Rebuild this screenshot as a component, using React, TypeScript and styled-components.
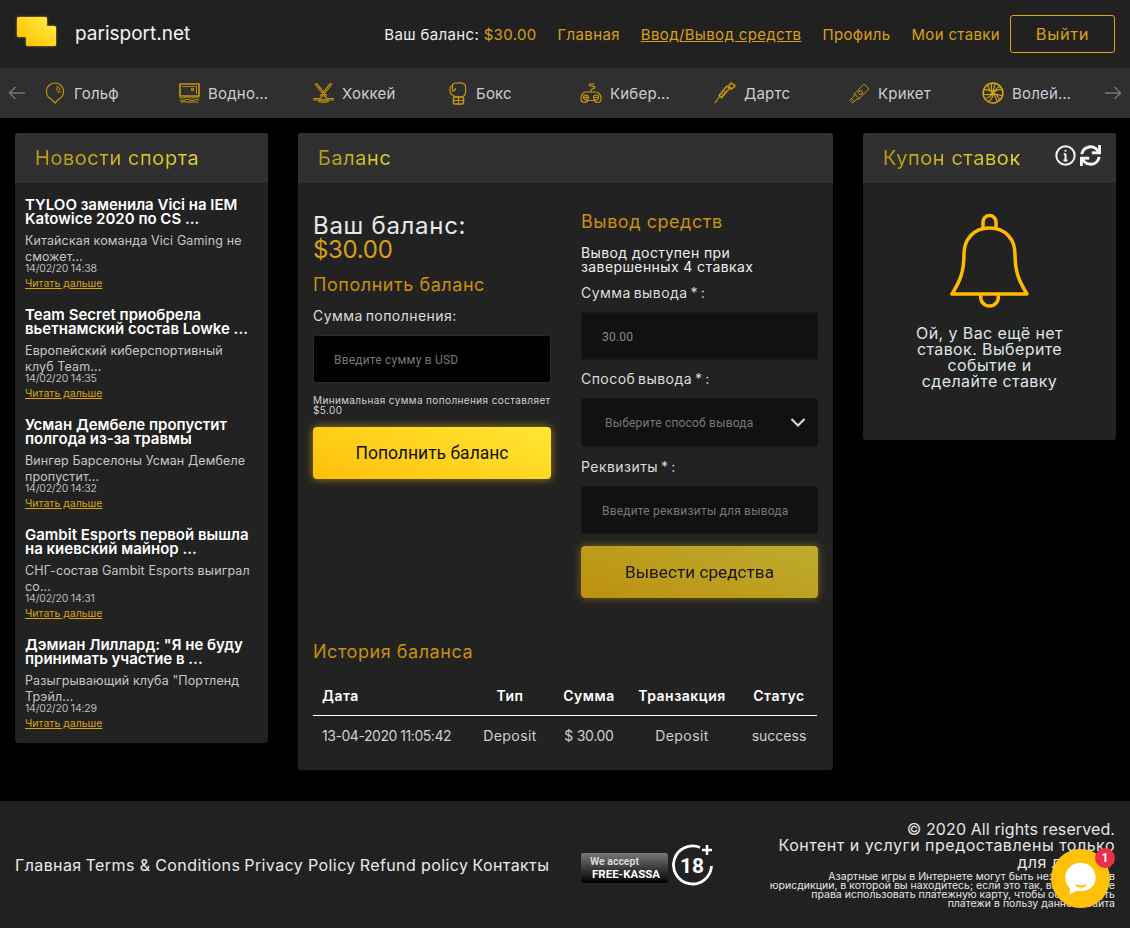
import React from "react";
import styled, { createGlobalStyle } from "styled-components";
import { FaSync } from "react-icons/fa";

const Global = createGlobalStyle`
  html, body { margin: 0; padding: 0; background: #000; }
  body { font-family: "Inter", "Noto Sans", sans-serif; color: #fff; }
  * { box-sizing: border-box; }
  a { color: inherit; text-decoration: none; }
`;

const Page = styled.div`
  width: 1130px; height: 928px; position: relative; overflow: hidden; background: #000;
`;
const Header = styled.header`
  height: 68px; background: #212121; display: flex; align-items: center; justify-content: space-between; padding: 0 15px 0 17px;
`;
const Brand = styled.a`
  display: flex; align-items: center; gap: 17px; font-size: 19px; color: #f2f2f2; letter-spacing: 0; padding-bottom: 2px;
`;
const Nav = styled.nav`
  display: flex; align-items: center; font-size: 15px; gap: 21px; letter-spacing: 0.35px; white-space: nowrap;
`;
const Balance = styled.span` color: #eee; `;
const Gold = styled.span` color: #d9a015; `;
const NavLink = styled.a<{ $active?: boolean }>`
  color: #d9a015; ${(p) => (p.$active ? "text-decoration: underline;" : "")}
`;
const Logout = styled.button`
  width: 105px; height: 38px; margin-left: -11px; background: transparent; border: 1px solid #e0a40f; border-radius: 3px;
  color: #d9a015; font: inherit; font-size: 16.5px; letter-spacing: 0.6px;
`;
const SportsBar = styled.div`
  height: 50px; background: #2f2f2f; display: flex; align-items: center; padding: 0 8px;
`;
const Arrow = styled.span` width: 18px; height: 14px; display: flex; color: #777; flex: none; `;
const SportList = styled.div`
  flex: 1; min-width: 0; display: flex; padding-left: 18px;
`;
const Sport = styled.div`
  flex: 0 0 134px; display: flex; align-items: center; font-size: 15px; color: #c9ced4; letter-spacing: 0.2px;
  &:last-child { flex-basis: 90px; }
`;
const SportIcon = styled.span`
  width: 22px; height: 24px; flex: none; margin-right: 8px; color: #c4940f; display: flex; align-items: center; justify-content: center;
`;
const SportName = styled.span`
  max-width: 63px; white-space: nowrap; overflow: hidden; text-overflow: ellipsis;
`;
const Main = styled.main`
  display: grid; grid-template-columns: 253px 535px 253px; column-gap: 30px; padding: 15px 15px 0; align-items: start; height: 683px;
`;
const Panel = styled.section`
  background: #222; border-radius: 3px; overflow: hidden;
`;
const PanelHead = styled.div`
  height: 50px; background: #303030; display: flex; align-items: center; justify-content: space-between; padding: 0 15px 0 20px;
`;
const PanelTitle = styled.h2`
  margin: 0; font-size: 20px; font-weight: 400; letter-spacing: 0.55px;
  background: linear-gradient(90deg, #b59a12, #e4d62e); -webkit-background-clip: text; background-clip: text; color: transparent;
`;
const NewsBody = styled.div` height: 560px; padding: 14px 10px 0; `;
const NewsItem = styled.article` height: 110px; `;
const NewsTitle = styled.h3`
  margin: 0 0 7px; font-size: 15px; line-height: 14px; font-weight: 600; color: #fff; letter-spacing: 0; padding-top: 1px;
`;
const NewsText = styled.p`
  margin: 0; width: 228px; font-size: 12.5px; line-height: 16px; color: #c6c6c6; letter-spacing: 0.12px;
`;
const NewsDate = styled.div`
  font-size: 10.5px; line-height: 10px; margin-top: -1px; color: #bbb; letter-spacing: -0.2px;
`;
const ReadMore = styled.a`
  display: block; margin-top: 4px; font-size: 10.5px; line-height: 12px; color: #dca312; text-decoration: underline;
`;
const BalanceBody = styled.div` height: 587px; padding: 0 15px; `;
const Columns = styled.div`
  display: grid; grid-template-columns: 238px 237px; column-gap: 30px; height: 457px;
`;
const Col = styled.div` display: flex; flex-direction: column; `;
const BigBalance = styled.div`
  margin-top: 31px; font-size: 24px; line-height: 24px; color: #e8e8e8; letter-spacing: 0.7px;
`;
const BigAmount = styled.div` font-size: 24px; line-height: 24px; color: #d9a015; letter-spacing: -0.3px; `;
const SubTitle = styled.h3<{ $top?: number }>`
  margin: ${(p) => p.$top ?? 12}px 0 0; font-size: 18px; line-height: 24px; font-weight: 400; color: #c8900f; letter-spacing: 0.55px;
`;
const Label = styled.label<{ $top?: number }>`
  display: block; margin-top: ${(p) => p.$top ?? 10}px; margin-bottom: 11px; font-size: 14px; line-height: 17px; color: #ddd;
  letter-spacing: 0.45px; word-spacing: -1.5px;
`;
const Field = styled.input<{ $dark?: boolean }>`
  display: block; width: 100%; height: 48px; padding: 1px 20px 0; background: ${(p) => (p.$dark ? "#000" : "#111")};
  border: 1px solid ${(p) => (p.$dark ? "#2a2a2a" : "#181818")}; border-radius: 3px; color: #8a8a8a; outline: none;
  font-family: "Roboto", sans-serif; font-size: 12px; letter-spacing: 0.2px;
  &::placeholder { color: #777; opacity: 1; }
`;
const SelectWrap = styled.div` position: relative; `;
const Select = styled.select`
  display: block; width: 100%; height: 49px; padding: 1px 0 0 23px; appearance: none; background: #111; border: 1px solid #181818; border-radius: 3px;
  color: #777; font-family: "Roboto", sans-serif; font-size: 12px; letter-spacing: 0.2px; outline: none;
`;
const Chevron = styled.svg`
  position: absolute; right: 12px; top: 19px; width: 16px; height: 11px; color: #ddd; pointer-events: none;
`;
const Hint = styled.p`
  margin: 12px 0 0; font-size: 10px; line-height: 10px; color: #d0d0d0; letter-spacing: 0.38px; white-space: pre-line;
`;
const Note = styled.p`
  margin: 12px 0 0; font-size: 14px; line-height: 14px; color: #eee; letter-spacing: 0.4px;
`;
const Action = styled.button<{ $dim?: boolean; $top?: number }>`
  flex: none; width: 100%; height: 52px; margin-top: ${(p) => p.$top ?? 11}px; border: 0; border-radius: 4px; color: #111;
  font-family: "Roboto", sans-serif; font-size: ${(p) => (p.$dim ? 17.2 : 17.5)}px;
  background: linear-gradient(20deg, #ffbf0a, #ffe733);
  box-shadow: 0 0 10px rgba(255, 213, 30, 0.55);
  opacity: ${(p) => (p.$dim ? 0.7 : 1)};
`;
const HistoryTitle = styled.h3`
  margin: 0; font-size: 18px; line-height: 24px; font-weight: 400; color: #c8900f; letter-spacing: 0.55px;
`;
const Table = styled.table`
  width: 504px; margin-top: 13px; border-collapse: collapse; table-layout: fixed; font-size: 14px;
`;
const Th = styled.th<{ $w: number; $left?: boolean; $shift?: boolean }>`
  width: ${(p) => p.$w}px; height: 38px; padding: ${(p) => (p.$left ? "0 0 0 9px" : p.$shift ? "0 0 0 8px" : "0")};
  text-align: ${(p) => (p.$left ? "left" : "center")}; font-weight: 600; color: #fff; border-bottom: 1px solid #fff; letter-spacing: 0.5px; white-space: nowrap;
`;
const Td = styled.td<{ $left?: boolean; $shift?: boolean; $ls?: number }>`
  height: 41px; padding: ${(p) => (p.$left ? "0 0 0 9px" : p.$shift ? "0 0 0 8px" : "0")}; text-align: ${(p) => (p.$left ? "left" : "center")};
  color: #cfcfcf; letter-spacing: ${(p) => p.$ls ?? 0}px; white-space: nowrap;
`;
const HeadIcons = styled.div` display: flex; align-items: center; gap: 4px; margin-top: -6px; color: #f4f4f4; `;
const CouponBody = styled.div`
  height: 257px; display: flex; flex-direction: column; align-items: center; padding-top: 30px;
`;
const CouponText = styled.p`
  margin: 16px 0 0; width: 156px; text-align: center; font-size: 16px; line-height: 16px; color: #dfe4e8; letter-spacing: 0.4px;
`;
const Footer = styled.footer`
  height: 127px; background: #212121; display: flex; align-items: center; padding: 0 15px;
`;
const FootNav = styled.nav`
  width: 566px; flex: none; display: flex; gap: 4px; font-size: 16px; color: #eaeaea; white-space: nowrap; letter-spacing: 0.4px;
`;
const Kassa = styled.div`
  flex: none; width: 87px; height: 30px; border-radius: 2px; background: linear-gradient(#777, #000); margin-top: 7px;
  font-family: "Roboto", sans-serif; font-weight: 700; color: #d8d8d8; padding: 2px 0 0 9px; font-size: 10.5px; line-height: 13px;
`;
const KassaStrong = styled.div` font-size: 11.5px; color: #fff; padding-left: 2px; `;
const Legal = styled.div`
  margin-left: auto; width: 348px; text-align: right; color: #e6e6e6;
`;
const LegalBig = styled.div<{ $ls: number }>` font-size: 16px; line-height: 16.5px; letter-spacing: ${(p) => p.$ls}px; `;
const LegalSmall = styled.div` font-size: 10.5px; line-height: 9.2px; letter-spacing: 0; margin-top: 1.5px; `;
const Chat = styled.div`
  position: absolute; left: 1051px; top: 849px; width: 59px; height: 59px; border-radius: 50%; background: #ffc107;
  display: flex; align-items: center; justify-content: center;
`;
const Badge = styled.span`
  position: absolute; right: -5px; top: -1px; width: 20px; height: 20px; border-radius: 50%; background: #e8304a; color: #fff;
  font-family: "Roboto", sans-serif; font-weight: 700; font-size: 12px; display: flex; align-items: center; justify-content: center;
`;

const S = { fill: "none", stroke: "currentColor", strokeWidth: 1.2, strokeLinecap: "round", strokeLinejoin: "round" } as const;

const Golf = () => (
  <svg width="20" height="22" viewBox="0 0 20 22" {...S}>
    <path d="M10 1a8.6 8.6 0 0 1 3.4 16.5L10 21l-3.4-3.5A8.6 8.6 0 0 1 10 1z" />
    <path d="M12 4.5l1 .8M14.5 6l.3 1.2M11.5 7l1 .7M15 9l.2 1M13 9.5l.5.8" />
  </svg>
);
const Water = () => (
  <svg width="21" height="20" viewBox="0 0 21 20" {...S}>
    <rect x="1" y="1" width="19" height="12" strokeWidth="1.7" />
    <path d="M3.5 3.5h14v7" strokeWidth="0.9" />
    <circle cx="13.5" cy="6.5" r="1.1" />
    <path d="M1 14.5q2.5 1.5 5 0t4.5 0 5 0 4.5 0M1 17q2.5 1.5 5 0t4.5 0 5 0 4.5 0M2 19h17" strokeWidth="1" />
  </svg>
);
const Hockey = () => (
  <svg width="21" height="20" viewBox="0 0 21 20" {...S}>
    <path d="M2 1l10 12.5M3.6.4l10 12.3M19 1L9 13.5M17.4.4l-10 12.3" />
    <path d="M12 13.5l2 2h6v1.5H6M9 13.5l-2 2H1V17h6" />
    <ellipse cx="10.5" cy="18" rx="5" ry="1.2" />
  </svg>
);
const Glove = () => (
  <svg width="19" height="23" viewBox="0 0 19 23" {...S}>
    <path d="M4.5 2.5C6 1 11 .8 14 1.2c2.5.4 3.6 2 3.6 4.5v4.5c0 2-1 3.5-2.5 4.3V15H6v-1.5C3.5 13 2 11.5 2 9V6c0-1.5 1-2.2 2.5-1.8z" />
    <path d="M4.5 2.5v6.5c2 0 3-1 3-2.5" />
    <rect x="5.5" y="15" width="10" height="7" rx="1" strokeWidth="1.6" />
    <path d="M10.5 15v7M5.5 18.5h10" />
  </svg>
);
const Pad = () => (
  <svg width="22" height="22" viewBox="0 0 22 22" {...S}>
    <path d="M11 10V8c0-1.500 4-.8 4-2.500S9 4.500 9 3s4-1 5-1" />
    <path d="M6 10h10c3 0 5 3.500 5 6.500 0 2.500-1.500 4-3.500 4-1.500 0-2.500-.8-3.500-2H8c-1 1.200-2 2-3.500 2C2.500 20.500 1 19 1 16.500 1 13.500 3 10 6 10z" />
    <circle cx="6" cy="15.500" r="2.500" />
    <circle cx="16" cy="15.500" r="2.500" />
    <path d="M6 14v3M4.500 15.500h3M14.500 15.500h3" strokeWidth="0.9" />
  </svg>
);
const Dart = () => (
  <svg width="22" height="22" viewBox="0 0 22 22" {...S}>
    <path d="M1 21l5-7" />
    <path d="M5 13.500l2.500 2.200 8-9.500L13 4z" strokeWidth="1.6" />
    <path d="M8 12l1.800 1.500M10 9.500l1.800 1.500" />
    <path d="M15 3.500l2-2.500 4 2.500-1 2-2 .5-1 1.500z" strokeWidth="1.5" />
  </svg>
);
const Bat = () => (
  <svg width="21" height="21" viewBox="0 0 21 21" {...S} strokeWidth="1">
    <path d="M1 17.500L3.500 20 8 16l2-.5L20 6l-5-5L5.500 11 5 13z" />
    <path d="M3 16l2.500 2.500M5.500 11l5 5" />
    <circle cx="11.500" cy="9.500" r="2" />
  </svg>
);
const Volley = () => (
  <svg width="22" height="22" viewBox="0 0 22 22" fill="none" stroke="#d8a60f" strokeWidth="1.2">
    <circle cx="11" cy="11" r="9.900" strokeWidth="1.500" />
    <path d="M11 11C9 7 9 4 10 1.500M11 11c3-3 6-4 9.500-3.500M11 11c3 1 5 3 6.500 7M11 11c-3 2-7 2-9.800 1M11 11c0 4-2 7-4.500 9M13 2c-1 3-1.500 6-2 9M18 4.500c-3 .8-5 3.500-7 6.500M2 8c3-1 6 0 9 3M20.500 14c-3-1-6-1.500-9.500-3M6 3c0 3 2 6 5 8M4 16c3 0 5-2 7-5M15 20c0-3-2-6-4-9" />
  </svg>
);

const sports = [
  ["Гольф", <Golf />],
  ["Водное поло", <Water />],
  ["Хоккей", <Hockey />],
  ["Бокс", <Glove />],
  ["Киберспорт", <Pad />],
  ["Дартс", <Dart />],
  ["Крикет", <Bat />],
  ["Волейбол", <Volley />],
] as const;

const news = [
  ["TYLOO заменила Vici на IEM Katowice 2020 по CS ...", "Китайская команда Vici Gaming не сможет...", "14/02/20 14:38"],
  ["Team Secret приобрела вьетнамский состав Lowke ...", "Европейский киберспортивный клуб Team...", "14/02/20 14:35"],
  ["Усман Дембеле пропустит полгода из-за травмы", "Вингер Барселоны Усман Дембеле пропустит...", "14/02/20 14:32"],
  ["Gambit Esports первой вышла на киевский майнор ...", "СНГ-состав Gambit Esports выиграл со...", "14/02/20 14:31"],
  ["Дэмиан Лиллард: \"Я не буду принимать участие в ...", "Разыгрывающий клуба \"Портленд Трэйл...", "14/02/20 14:29"],
];

export default function App() {
  return (
    <Page>
      <Global />
      <Header>
        <Brand href="#">
          <svg width="41" height="32" viewBox="0 0 41 32" style={{ overflow: "visible" }}>
            <defs>
              <linearGradient id="lg" x1="0" y1="1" x2="1" y2="0">
                <stop offset="0" stopColor="#ffc107" />
                <stop offset="1" stopColor="#ffeb3b" />
              </linearGradient>
              <filter id="gl" x="-30%" y="-30%" width="160%" height="160%">
                <feGaussianBlur stdDeviation="1.2" />
              </filter>
            </defs>
            <rect x="0" y="0" width="30" height="20" rx="1.500" fill="#ffd21e" filter="url(#gl)" opacity="0.7" />
            <rect x="9" y="9" width="30" height="20" rx="1.500" fill="#ffd21e" filter="url(#gl)" opacity="0.7" />
            <rect x="0" y="0" width="30" height="20" rx="1.500" fill="url(#lg)" />
            <rect x="9" y="9" width="30" height="20" rx="1.500" fill="url(#lg)" />
          </svg>
          parisport.net
        </Brand>
        <Nav>
          <Balance>Ваш баланс: <Gold>$30.00</Gold></Balance>
          <NavLink href="#">Главная</NavLink>
          <NavLink href="#" $active>Ввод/Вывод средств</NavLink>
          <NavLink href="#">Профиль</NavLink>
          <NavLink href="#">Мои ставки</NavLink>
          <Logout>Выйти</Logout>
        </Nav>
      </Header>
      <SportsBar>
        <Arrow>
          <svg width="18" height="14" viewBox="0 0 18 14" fill="none" stroke="currentColor" strokeWidth="1.4"><path d="M17 7H1.500M7.500 1L1.500 7l6 6" /></svg>
        </Arrow>
        <SportList>
          {sports.map(([name, icon]) => (
            <Sport key={name}>
              <SportIcon>{icon}</SportIcon>
              <SportName>{name}</SportName>
            </Sport>
          ))}
        </SportList>
        <Arrow>
          <svg width="18" height="14" viewBox="0 0 18 14" fill="none" stroke="currentColor" strokeWidth="1.4"><path d="M1 7h15.500M10.500 1l6 6-6 6" /></svg>
        </Arrow>
      </SportsBar>
      <Main>
        <Panel>
          <PanelHead><PanelTitle>Новости спорта</PanelTitle></PanelHead>
          <NewsBody>
            {news.map(([t, d, when]) => (
              <NewsItem key={when}>
                <NewsTitle>{t}</NewsTitle>
                <NewsText>{d}</NewsText>
                <NewsDate>{when}</NewsDate>
                <ReadMore href="#">Читать дальше</ReadMore>
              </NewsItem>
            ))}
          </NewsBody>
        </Panel>
        <Panel>
          <PanelHead><PanelTitle>Баланс</PanelTitle></PanelHead>
          <BalanceBody>
            <Columns>
              <Col>
                <BigBalance>Ваш баланс:</BigBalance>
                <BigAmount>$30.00</BigAmount>
                <SubTitle $top={11}>Пополнить баланс</SubTitle>
                <Label>Сумма пополнения:</Label>
                <Field $dark placeholder="Введите сумму в USD" />
                <Hint>{"Минимальная сумма пополнения составляет\n$5.00"}</Hint>
                <Action $top={12}>Пополнить баланс</Action>
              </Col>
              <Col>
                <SubTitle $top={27}>Вывод средств</SubTitle>
                <Note>Вывод доступен при завершенных 4 ставках</Note>
                <Label>Сумма вывода * :</Label>
                <Field defaultValue="30.00" />
                <Label>Способ вывода * :</Label>
                <SelectWrap>
                  <Select defaultValue="">
                    <option value="">Выберите способ вывода</option>
                  </Select>
                  <Chevron viewBox="0 0 16 11" fill="none" stroke="currentColor" strokeWidth="2"><path d="M1.500 2L8 8.500 14.500 2" /></Chevron>
                </SelectWrap>
                <Label $top={11}>Реквизиты * :</Label>
                <Field placeholder="Введите реквизиты для вывода" />
                <Action $dim $top={12}>Вывести средства</Action>
              </Col>
            </Columns>
            <HistoryTitle>История баланса</HistoryTitle>
            <Table>
              <thead>
                <tr>
                  <Th $w={160} $left>Дата</Th>
                  <Th $w={74}>Тип</Th>
                  <Th $w={84}>Сумма</Th>
                  <Th $w={102}>Транзакция</Th>
                  <Th $w={84} $shift>Статус</Th>
                </tr>
              </thead>
              <tbody>
                <tr>
                  <Td $left $ls={-0.45}>13-04-2020 11:05:42</Td>
                  <Td $ls={0.4}>Deposit</Td>
                  <Td $ls={-0.3}>$ 30.00</Td>
                  <Td $ls={0.4}>Deposit</Td>
                  <Td $shift>success</Td>
                </tr>
              </tbody>
            </Table>
          </BalanceBody>
        </Panel>
        <Panel>
          <PanelHead>
            <PanelTitle>Купон ставок</PanelTitle>
            <HeadIcons>
              <svg width="21" height="21" viewBox="0 0 21 21" fill="none" stroke="currentColor" strokeWidth="2">
                <circle cx="10.500" cy="10.500" r="9.200" />
                <path d="M10.500 9v6.500M8.500 15.500h4M8.800 9h1.700" />
                <circle cx="10.500" cy="5.800" r="1.100" fill="currentColor" stroke="none" />
              </svg>
              <FaSync size={21} />
            </HeadIcons>
          </PanelHead>
          <CouponBody>
            <svg width="79" height="96" viewBox="0 0 79 96" fill="none" stroke="#ffb900" strokeWidth="3.500" strokeLinejoin="round">
              <path d="M33 16V9a6.500 6.500 0 0 1 13 0v7" />
              <path d="M39.500 15C23 15 14 27 14 41c0 18-4 27-12 40h75c-8-13-12-22-12-40 0-14-9-26-25.500-26z" />
              <path d="M31 82a8.800 8.800 0 1 0 17 0" />
            </svg>
            <CouponText>Ой, у Вас ещё нет ставок. Выберите событие и сделайте ставку</CouponText>
          </CouponBody>
        </Panel>
      </Main>
      <Footer>
        <FootNav>
          <a href="#">Главная</a>
          <a href="#">Terms &amp; Conditions</a>
          <a href="#">Privacy Policy</a>
          <a href="#">Refund policy</a>
          <a href="#">Контакты</a>
        </FootNav>
        <Kassa>We accept<KassaStrong>FREE-KASSA</KassaStrong></Kassa>
        <svg width="42" height="44" viewBox="0 0 42 44" fill="none" style={{ marginLeft: 4, flex: "none" }}>
          <path d="M28 4.500A19 19 0 1 0 39.500 23" stroke="#fff" strokeWidth="2.800" />
          <path d="M35 2v10M30 7h10" stroke="#fff" strokeWidth="2.500" />
          <text x="20" y="30" textAnchor="middle" fontFamily="Roboto, sans-serif" fontWeight="700" fontSize="21" fill="#fff">18</text>
        </svg>
        <Legal>
          <LegalBig $ls={0.1}>© 2020 All rights reserved.</LegalBig>
          <LegalBig $ls={0.5}>Контент и услуги предоставлены только для лиц 18+</LegalBig>
          <LegalSmall>Азартные игры в Интернете могут быть незаконными в юрисдикции, в которой вы находитесь; если это так, вы не имеете права использовать платежную карту, чтобы осуществить платежи в пользу данного сайта</LegalSmall>
        </Legal>
      </Footer>
      <Chat>
        <svg width="33" height="35" viewBox="0 0 38 40">
          <path d="M19 2C9 2 1.500 9.500 1.500 19c0 5 2 9 5.500 12.500L6.500 38l8-4c1.500.3 3 .5 4.500.5C29 34.500 36.500 28 36.500 19S29 2 19 2z" fill="#fff" />
          <path d="M13 26c4 2.500 9 2.500 13 0-1 3.500-3 4.500-6.500 4.500S14 29.500 13 26z" fill="#ffc107" />
        </svg>
        <Badge>1</Badge>
      </Chat>
    </Page>
  );
}
